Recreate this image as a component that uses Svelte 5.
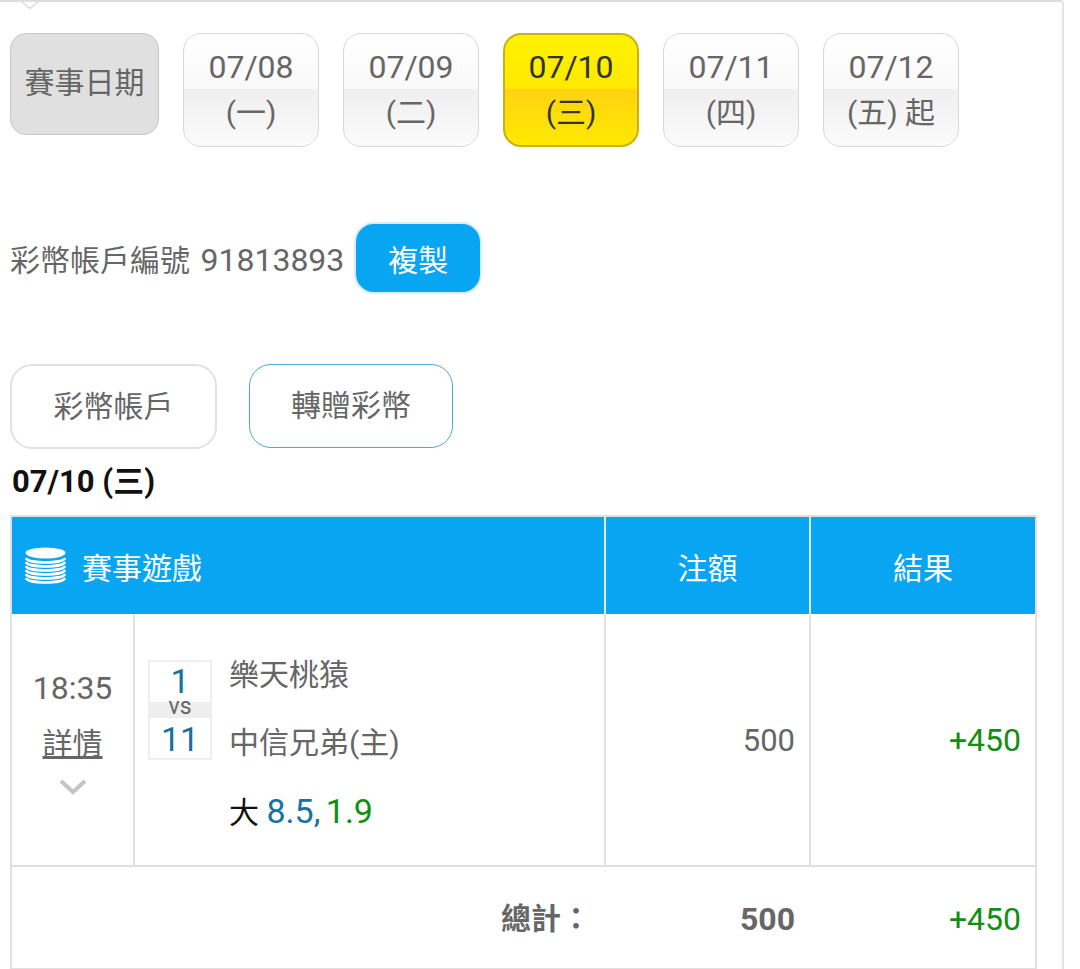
<script>
    const dates = [
        { day: "07/08", week: "(一)" },
        { day: "07/09", week: "(二)" },
        { day: "07/10", week: "(三)", active: true },
        { day: "07/11", week: "(四)" },
        { day: "07/12", week: "(五) 起" }
    ];
</script>

<div class="panel">
    <svg class="notch" width="28" height="10" viewBox="0 0 28 10">
        <path d="M0 1H5L14 8.5L23 1H28" fill="#fff" stroke="#ddd" stroke-width="1.5" />
    </svg>

    <div class="date-row">
        <div class="date-label">賽事日期</div>
        {#each dates as d}
            <div class="date-btn" class:active={d.active}>
                <span class="day">{d.day}</span>
                <span>{d.week}</span>
            </div>
        {/each}
    </div>

    <div class="account-row">
        <span>彩幣帳戶編號 <span class="digits">91813893</span></span>
        <button class="copy">複製</button>
    </div>

    <div class="tabs">
        <div class="tab">彩幣帳戶</div>
        <div class="tab selected">轉贈彩幣</div>
    </div>

    <div class="heading">07/10 (三)</div>

    <div class="table">
        <div class="head game-head">
            <svg class="coins" width="41" height="40" viewBox="0 0 41 40">
                <ellipse cx="20.5" cy="7" rx="20" ry="5.5" fill="#fff" />
                <g fill="none" stroke="#fff" stroke-width="2.6">
                    <path d="M.8 12C4 18 37 18 40.2 12" />
                    <path d="M.8 16C4 22 37 22 40.2 16" />
                    <path d="M.8 20C4 26 37 26 40.2 20" />
                    <path d="M.8 24C4 30 37 30 40.2 24" />
                    <path d="M.8 28C4 34 37 34 40.2 28" />
                    <path d="M.8 32C4 38 37 38 40.2 32" />
                </g>
            </svg>
            <span>賽事遊戲</span>
        </div>
        <div class="head center">注額</div>
        <div class="head center">結果</div>

        <div class="cell time-cell">
            <div class="time">18:35</div>
            <div class="detail">詳情</div>
            <svg class="chevron" width="28" height="18" viewBox="0 0 28 18">
                <path d="M2 3L14 14L26 3" fill="none" stroke="#c4c4c4" stroke-width="4" />
            </svg>
        </div>
        <div class="cell game-cell">
            <div class="score">
                <div class="num first">1</div>
                <div class="vs">vs</div>
                <div class="num">11</div>
            </div>
            <div class="teams">
                <div>樂天桃猿</div>
                <div>中信兄弟(主)</div>
                <div class="bet">大 <span class="blue">8.5,</span> <span class="green odds">1.9</span></div>
            </div>
        </div>
        <div class="cell amount"><span class="stake">500</span></div>
        <div class="cell amount green">+450</div>

        <div class="total-label">總計：</div>
        <div class="total-num bold">500</div>
        <div class="total-num green">+450</div>
    </div>
</div>

<style>
    :global(body) {
        background: #fff;
    }

    .panel {
        position: relative;
        display: flex;
        flex-direction: column;
        box-sizing: border-box;
        width: 1064px;
        height: 969px;
        padding: 31px 26px 0 10px;
        border-top: 2px solid #ddd;
        border-right: 2px solid #e4e4e4;
        border-top-right-radius: 4px;
        overflow: hidden;
        font-family: Roboto, "Noto Sans CJK TC", sans-serif;
        color: #666;
    }

    .notch {
        position: absolute;
        left: 16px;
        top: -2px;
    }

    .date-row {
        display: flex;
        align-items: flex-start;
        gap: 24px;
    }

    .date-label {
        box-sizing: border-box;
        width: 149px;
        height: 102px;
        padding-top: 29px;
        border: 1px solid #c8c8c8;
        border-radius: 16px;
        background: #e0e0e0;
        text-align: center;
        font-size: 30px;
        line-height: 40px;
    }

    .date-btn {
        box-sizing: border-box;
        display: flex;
        flex-direction: column;
        align-items: center;
        width: 136px;
        height: 114px;
        padding-top: 11px;
        border: 1px solid #d8d8d8;
        border-radius: 18px;
        background: linear-gradient(#fff 0, #f9f9f9 49%, #efefef 49.5%, #fbfbfb 100%);
        font-size: 30px;
        line-height: 45px;
    }

    .day {
        font-size: 32px;
    }

    .date-btn.active {
        border: 2px solid #c9b20f;
        padding-top: 10px;
        background: linear-gradient(#fff200 0, #ffe900 49%, #ffd311 49.5%, #ffe900 100%);
        color: #333;
    }

    .account-row {
        display: flex;
        align-items: center;
        gap: 10px;
        margin-top: 75px;
        font-size: 30px;
    }

    .digits {
        margin-left: 3px;
        font-size: 32px;
    }

    .copy {
        width: 128px;
        height: 72px;
        border: 2px solid #d9ecf8;
        border-radius: 20px;
        background: #08a5f3;
        color: #fff;
        font-family: inherit;
        font-size: 30px;
    }

    .tabs {
        display: flex;
        gap: 32px;
        margin-top: 70px;
    }

    .tab {
        box-sizing: border-box;
        width: 207px;
        height: 85px;
        border: 2px solid #e2e2e2;
        border-radius: 22px;
        text-align: center;
        font-size: 30px;
        line-height: 82px;
    }

    .tab.selected {
        width: 204px;
        height: 84px;
        border: 1.5px solid #4ba9d3;
    }

    .heading {
        height: 38px;
        margin-top: 14px;
        padding-left: 2px;
        color: #111;
        font-size: 31px;
        font-weight: 700;
        line-height: 38px;
    }

    .table {
        flex: 1;
        display: grid;
        grid-template-columns: 121px 471px 205px 226px;
        grid-template-rows: 97px 253px 1fr;
        box-sizing: border-box;
        width: 1027px;
        margin-top: 14px;
        border: solid #e0e0e0;
        border-width: 2px 2px 1px;
    }

    .head {
        display: flex;
        align-items: center;
        background: #08a5f3;
        color: #fff;
        font-size: 30px;
        border-left: 2px solid #d8eefa;
    }

    .game-head {
        grid-column: 1 / 3;
        gap: 16px;
        padding-left: 13px;
        border-left: 0;
    }

    .center {
        justify-content: center;
    }

    .cell {
        box-sizing: border-box;
        border-left: 2px solid #e0e0e0;
        border-bottom: 2px solid #e0e0e0;
    }

    .time-cell {
        border-left: 0;
        padding-top: 54px;
        text-align: center;
    }

    .time {
        font-size: 32px;
        line-height: 40px;
    }

    .detail {
        margin-top: 16px;
        font-size: 30px;
        line-height: 40px;
        text-decoration: underline;
    }

    .chevron {
        display: block;
        margin: 14px auto 0;
    }

    .game-cell {
        display: flex;
        align-items: flex-start;
        gap: 17px;
        padding: 46px 0 0 13px;
    }

    .score {
        box-sizing: border-box;
        width: 64px;
        height: 100px;
        border: 2px solid #eee;
        text-align: center;
        color: #17729f;
        font-size: 34px;
    }

    .num {
        height: 40px;
        line-height: 42px;
    }

    .num.first {
        height: 40px;
        line-height: 38px;
    }

    .vs {
        height: 16px;
        background: #eee;
        color: #666;
        font-size: 23px;
        line-height: 10px;
    }

    .teams {
        margin-top: -19px;
        font-size: 30px;
        line-height: 68px;
    }

    .bet {
        color: #111;
    }

    .bet span {
        font-size: 34px;
    }

    .odds {
        margin-left: -2px;
    }

    .blue {
        color: #17729f;
    }

    .green {
        color: #128f12;
    }

    .amount {
        padding: 106px 14px 0 0;
        text-align: right;
        font-size: 32px;
        line-height: 40px;
    }

    .stake {
        font-size: 31px;
    }

    .total-label {
        grid-column: 1 / 3;
        padding: 32px 13px 0 0;
        text-align: right;
        font-size: 30px;
        font-weight: 700;
        line-height: 40px;
    }

    .total-num {
        padding: 32px 14px 0 0;
        text-align: right;
        font-size: 32px;
        line-height: 40px;
    }

    .bold {
        font-weight: 700;
    }
</style>
